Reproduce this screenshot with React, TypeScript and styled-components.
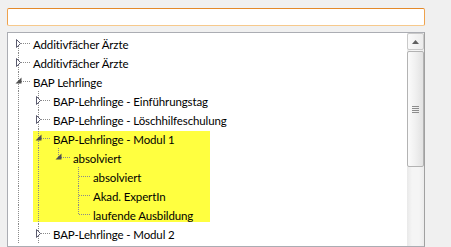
import React from "react";
import styled, { createGlobalStyle } from "styled-components";

const Global = createGlobalStyle`
  html, body { margin: 0; padding: 0; background: #f0f0f0; }
  body { font-family: Lato, "Segoe UI", sans-serif; font-size: 11.5px; letter-spacing: -0.12px; color: #000; }
  * { box-sizing: border-box; }
`;

type Node = {
  label: string;
  expanded?: boolean;
  leaf?: boolean;
  highlight?: boolean;
  continues?: boolean;
  children?: Node[];
};

const tree: Node[] = [
  { label: "Additivfächer Ärzte" },
  { label: "Additivfächer Ärzte" },
  {
    label: "BAP Lehrlinge",
    expanded: true,
    continues: true,
    children: [
      { label: "BAP-Lehrlinge - Einführungstag" },
      { label: "BAP-Lehrlinge - Löschhilfeschulung" },
      {
        label: "BAP-Lehrlinge - Modul 1",
        expanded: true,
        highlight: true,
        children: [
          {
            label: "absolviert",
            expanded: true,
            children: [
              { label: "absolviert", leaf: true },
              { label: "Akad. ExpertIn", leaf: true },
              { label: "laufende Ausbildung", leaf: true },
            ],
          },
        ],
      },
      { label: "BAP-Lehrlinge - Modul 2", continues: true },
    ],
  },
];

const LINE = "#8a8a8a";

const Page = styled.div`
  padding: 8px 26px 0 7px;
  display: flex;
  flex-direction: column;
  gap: 6px;
  height: 247px;
  overflow: hidden;
`;

const Search = styled.input`
  width: 418px;
  height: 20px;
  border: 1px solid #eea24d;
  border-top-color: #e3892a;
  border-bottom-color: #f6c98c;
  border-radius: 2px;
  background: #fff;
  outline: none;
  padding: 0 4px;
  font: inherit;
`;

const Panel = styled.div`
  width: 418px;
  height: 240px;
  border: 1px solid #abadb3;
  border-right-color: #a0a0a0;
  background: #fff;
  display: flex;
  overflow: hidden;
`;

const TreeArea = styled.div`
  flex: 1;
  padding-top: 1px;
  display: flex;
  flex-direction: column;
`;

const Group = styled.div<{ $hl?: boolean }>`
  display: flex;
  flex-direction: column;
  background: ${(p) =>
    p.$hl ? "linear-gradient(#ffff40, #ffff40) 25px 2px / 177px calc(100% - 4px) no-repeat" : "none"};
`;

const Row = styled.div`
  height: 19px;
  display: flex;
  align-items: stretch;
`;

const Guide = styled.div<{ $line: boolean }>`
  width: 20px;
  flex: none;
  background-image: ${(p) =>
    p.$line ? `linear-gradient(to bottom, ${LINE} 50%, transparent 50%)` : "none"};
  background-size: 1px 2px;
  background-repeat: repeat-y;
  background-position: 10px 0;
`;

const Connector = styled.svg`
  width: 25px;
  height: 19px;
  flex: none;
  display: block;
`;

const Label = styled.span`
  display: flex;
  align-items: center;
  white-space: nowrap;
  line-height: 19px;
  padding-top: 1px;
`;

const ScrollBar = styled.div`
  width: 17px;
  flex: none;
  display: flex;
  flex-direction: column;
  background: linear-gradient(to right, #e9e9e9, #f5f5f5 30%, #f5f5f5 70%, #ececec);
`;

const ScrollButton = styled.div`
  height: 17px;
  border: 1px solid #c9c9c9;
  border-radius: 2px;
  background: linear-gradient(to right, #fafafa, #ececec);
  display: flex;
  align-items: center;
  justify-content: center;
`;

const Thumb = styled.div`
  height: 116px;
  margin-top: 1px;
  border: 1px solid #b3b3b3;
  border-radius: 2px;
  background: linear-gradient(to right, #fbfbfb, #f0f0f0 50%, #e2e2e2);
  display: flex;
  flex-direction: column;
  align-items: center;
  justify-content: center;
  gap: 1px;
`;

const Grip = styled.div`
  width: 7px;
  height: 1px;
  background: #8c8c8c;
`;

type RowProps = { node: Node; guides: boolean[]; hasNext: boolean; first: boolean };

function TreeRow({ node, guides, hasNext, first }: RowProps) {
  const hasExp = !node.leaf;
  return (
    <Row>
      {guides.map((g, i) => (
        <Guide key={i} $line={g} />
      ))}
      <Connector viewBox="0 0 25 19">
        {!first && (
          <line x1="10.5" y1="0" x2="10.5" y2="9.5" stroke={LINE} strokeWidth="1" strokeDasharray="1 1" />
        )}
        {hasNext && (
          <line x1="10.5" y1="10" x2="10.5" y2="19" stroke={LINE} strokeWidth="1" strokeDasharray="1 1" />
        )}
        <line
          x1={hasExp ? 13 : 11}
          y1="9.5"
          x2="22"
          y2="9.5"
          stroke={LINE}
          strokeWidth="1"
          strokeDasharray="1 1"
        />
        {hasExp &&
          (node.expanded ? (
            <path d="M13.5 5.5 L13.5 11.5 L7.5 11.5 Z" fill="#4f4f4f" />
          ) : (
            <path d="M8.5 5.5 L12.5 9.5 L8.5 13.5 Z" fill="#fff" stroke="#5a5a6e" strokeWidth="1" />
          ))}
      </Connector>
      <Label>{node.label}</Label>
    </Row>
  );
}

function Branch({ nodes, level, guides }: { nodes: Node[]; level: number; guides: boolean[] }) {
  return (
    <>
      {nodes.map((n, i) => {
        const hasNext = i < nodes.length - 1 || !!n.continues;
        const first = level === 0 && i === 0;
        const content = (
          <>
            <TreeRow node={n} guides={guides} hasNext={hasNext} first={first} />
            {n.expanded && n.children && (
              <Branch nodes={n.children} level={level + 1} guides={[...guides, hasNext]} />
            )}
          </>
        );
        return n.highlight ? (
          <Group key={i} $hl>
            {content}
          </Group>
        ) : (
          <React.Fragment key={i}>{content}</React.Fragment>
        );
      })}
    </>
  );
}

export default function App() {
  return (
    <>
      <Global />
      <Page>
        <Search />
        <Panel>
          <TreeArea>
            <Branch nodes={tree} level={0} guides={[]} />
          </TreeArea>
          <ScrollBar>
            <ScrollButton>
              <svg width="7" height="4" viewBox="0 0 7 4">
                <path d="M3.5 0 L7 4 L0 4 Z" fill="#606060" />
              </svg>
            </ScrollButton>
            <Thumb>
              <Grip />
              <Grip />
              <Grip />
              <Grip />
            </Thumb>
          </ScrollBar>
        </Panel>
      </Page>
    </>
  );
}
